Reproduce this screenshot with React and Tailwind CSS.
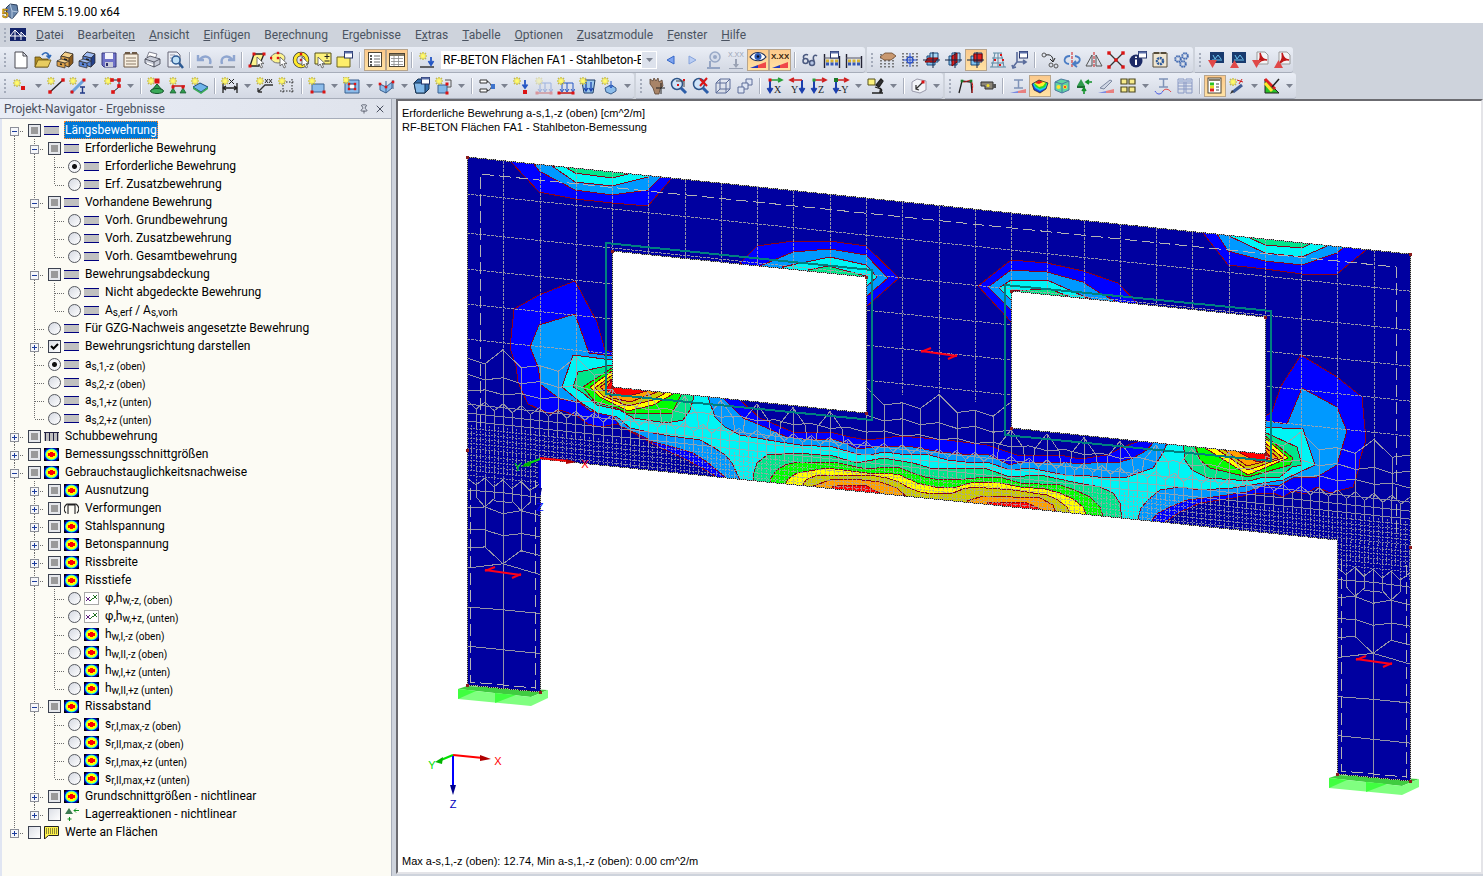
import React, { useState } from 'react';
import { Pin, X } from 'lucide-react';

/* ---------- small drawing parts shared by the toolbar icons ---------- */

const Star = ({ x = 4, y = 4 }) => (
  <g transform={`translate(${x} ${y})`}>
    <path d="M0-4V4M-4 0H4M-3-3 3 3M3-3-3 3" stroke="#a89e30" strokeWidth="1.2" />
    <path d="M0-3.5V3.5M-3.5 0H3.5M-2.4-2.4 2.4 2.4M2.4-2.4-2.4 2.4" stroke="#fff34a" strokeWidth="1" />
    <circle r="2" fill="#fffa70" />
  </g>
);

const Dots = ({ at, r = 1.5, fill = '#dc1414' }) =>
  at.map(([x, y]) => <rect key={`${x}-${y}`} x={x - r} y={y - r} width={r * 2} height={r * 2} fill={fill} />);

const Cursor = ({ x = 8, y = 6 }) => (
  <path transform={`translate(${x} ${y})`} d="M0 0V9L2.2 7 4 11 5.6 10.2 4 6.6H7Z" fill="#fff" stroke="#555" strokeWidth=".8" />
);

const Win = ({ x = 9, y = 0 }) => (
  <g transform={`translate(${x} ${y})`}>
    <rect x=".5" y=".5" width="8" height="6.5" fill="#fff" stroke="#26346a" />
    <rect x=".5" y=".5" width="8" height="2" fill="#5a6ea8" />
  </g>
);

const Cabinet = ({ a, b, c }) => (
  <g stroke="#2c2a28" strokeWidth=".7">
    <path d="M5 5 9 1 17 3V12L13 16 5 13Z" fill={c} />
    <path d="M5 5 9 1 17 3 13 7Z" fill={b} />
    <path d="M5 5 13 7V16L5 13Z" fill={a} />
    <path d="M1 10 9 12V17L1 15Z" fill={a} />
    <path d="M1 10 5 8 13 10 9 12Z" fill={b} />
    <path d="M8 8 11 9M4 13 6 13.500" stroke="#222" strokeWidth="1.6" />
  </g>
);

const Box3d = ({ on }) => (
  <g strokeWidth="1">
    <path d="M4 5H12V14H4Z" fill="#7fc0ee" stroke="#1b4a7c" />
    <path d="M7 2H15V11H7Z" fill="#a6d6f4" stroke="#1b4a7c" />
    {on === 'h' && <path d="M5 7H15L12 11H2Z" fill="#e02020" stroke="#7a0000" />}
    {on === 'v' && <path d="M7 5 12 2V11L7 15Z" fill="#e02020" stroke="#7a0000" />}
    {on === 'f' && <path d="M7 3H15V10H7Z" fill="#e02020" stroke="#7a0000" />}
    <path d="M0 9H17M10 1V17" stroke="#124" fill="none" />
  </g>
);

const Tri = ({ d, t, x = 8 }) => (
  <g>
    <path d={d} stroke="#1c3fae" strokeWidth="2" fill="none" />
    <text x={x} y="16" fontSize="10" fontFamily="Liberation Serif, serif" fill="#222">{t}</text>
  </g>
);

const Supports = ({ y = 13 }) => (
  <path d={`M4 ${y - 5}l-3 5h6zM14 ${y - 5}l-3 5h6z`} fill="#2f9a4c" stroke="#13562a" strokeWidth=".7" />
);

const Loads = ({ dim }) => (
  <g opacity={dim ? 0.35 : 1}>
    <path d="M2 16H17" stroke="#c01818" strokeWidth="1.500" />
    <path d="M5 6H16M5 6V14M10 6V14M16 6V14M3 12l2 3 2-3M8 12l2 3 2-3M14 12l2 3 2-3" stroke="#2456c4" fill="none" />
    <Star />
    <Dots at={[[2, 16], [16, 16]]} />
  </g>
);

const Table = () => (
  <g>
    <rect x="1.500" y="2.500" width="15" height="13" fill="#fff" stroke="#4c4434" />
    <path d="M2 4H16" stroke="#857b66" strokeWidth="2" />
    <path d="M3 7.5H15M3 10.5H15M3 13.5H15M6 5V15M10.500 5V15" stroke="#8a8a8a" strokeWidth=".8" />
  </g>
);

const Engine = ({ mark }) => (
  <g>
    <path d="M1.500 3V17M16.500 5V17" stroke="#223" strokeWidth="1.400" />
    <path d="M1 7H16" stroke="#556" />
    <path d="M3 10H16" stroke="#d8b430" strokeWidth="3" strokeDasharray="3 1.500" />
    <path d="M3 13H16" stroke="#3558b8" strokeWidth="3" strokeDasharray="3 1.500" />
    {mark && <Win x={7} />}
  </g>
);

const Module = ({ down }) => (
  <g>
    <path d="M3 1H17V12H3Z" fill="#183a6e" />
    <path d="M6 4 8 8 11 4 14 8M5 9H15" stroke="#6cc4f0" fill="none" />
    <path d={down ? 'M1 9H10L5.500 17Z' : 'M1 17H10L5.500 9Z'} fill="#e04848" />
  </g>
);

const Pdf = ({ down }) => (
  <g>
    <path d="M6 1H14L17 4V13H6Z" fill="#f4f4f6" stroke="#999" />
    <path d="M7 12C9 9 10 5 9 2C10 6 12 9 16 9C12 8 10 9 7 12Z" fill="#c01818" stroke="#c01818" strokeWidth="1.500" />
    <path d={down ? 'M1 9H10L5.500 17Z' : 'M1 17H10L5.500 9Z'} fill="#e04848" />
  </g>
);

const icons = {
  file: <path d="M3 1H11L15 5V17H3ZM11 1V5H15" fill="#fff" stroke="#4a4a52" />,
  open: (
    <g>
      <path d="M1 6H6L8 8H14V16H1Z" fill="#b08c22" stroke="#5c4710" strokeWidth=".8" />
      <path d="M4 9H17L14 16H1Z" fill="#e8cc60" stroke="#6c5514" strokeWidth=".8" />
      <path d="M8 4C11 0 15 2 15 6M12.500 4.500 15 7 17 4" stroke="#2f69b8" strokeWidth="1.600" fill="none" />
    </g>
  ),
  cabA: <Cabinet a="#dba04a" b="#f3cf8a" c="#8a5a1c" />,
  cabB: <Cabinet a="#5c86d8" b="#9fbcf2" c="#24408a" />,
  save: (
    <g>
      <path d="M2 2H16V16H4L2 14Z" fill="#6f72c8" stroke="#3a3b80" />
      <path d="M5 2H13V8H5Z" fill="#f3f3fb" />
      <path d="M5 11H13V16H5Z" fill="#c9cbd8" />
      <path d="M6 12H8V15H6Z" fill="#2c2d6c" />
    </g>
  ),
  report: (
    <g>
      <path d="M2 3H16V16H2Z" fill="#f8efe0" stroke="#6c5844" />
      <path d="M3 2H8M10 2H15" stroke="#6c5844" strokeWidth="2" />
      <path d="M4 7H14M4 10H14M4 13H14" stroke="#8a7a68" />
    </g>
  ),
  print: (
    <g>
      <path d="M5 1 13 3 11 8 3 6Z" fill="#fff" stroke="#667" strokeWidth=".8" />
      <path d="M1 8 6 5 16 8V13L10 16 1 12Z" fill="#c8ccd8" stroke="#3c3f4c" strokeWidth=".8" />
      <path d="M1 8 10 11 16 8M10 11V16" stroke="#3c3f4c" fill="none" strokeWidth=".8" />
      <path d="M3 12 9 14" stroke="#fff" strokeWidth="1.500" />
    </g>
  ),
  preview: (
    <g>
      <path d="M2 1H11L14 4V16H2Z" fill="#eceff6" stroke="#667" />
      <path d="M4 4H9M4 7H8M4 10H7" stroke="#99a" />
      <circle cx="10" cy="9" r="4" fill="#bfe0f6" stroke="#2c5a94" strokeWidth="1.500" />
      <path d="M13 12 17 17" stroke="#2c5a94" strokeWidth="2.500" />
    </g>
  ),
  undo: (
    <g>
      <path d="M1 16H17" stroke="#9aa0ac" strokeWidth="2" />
      <path d="M14 13C16 6 9 3 4 8M2 4V9H8" stroke="#8fa6d0" strokeWidth="2.400" fill="none" />
    </g>
  ),
  redo: (
    <g>
      <path d="M1 16H17" stroke="#9aa0ac" strokeWidth="2" />
      <path d="M4 13C2 6 9 3 14 8M16 4V9H10" stroke="#8fa6d0" strokeWidth="2.400" fill="none" />
    </g>
  ),
  selPoly: (
    <g>
      <path d="M6 3H16L11 15H2Z" fill="#fdf48e" stroke="#222" strokeWidth="1.300" />
      <Dots at={[[6, 3], [16, 3], [2, 15]]} />
      <Cursor x={9} />
    </g>
  ),
  selOval: (
    <g>
      <ellipse cx="8" cy="7" rx="7" ry="5" fill="#fdf48e" stroke="#777" />
      <Dots at={[[1, 7], [8, 2], [8, 7]]} r={1.2} />
      <Cursor x={10} />
    </g>
  ),
  selRing: (
    <g>
      <circle cx="9" cy="9" r="6" fill="none" stroke="#333" strokeWidth="4.500" />
      <circle cx="9" cy="9" r="6" fill="none" stroke="#ffe92c" strokeWidth="3" />
      <Dots at={[[9, 9], [9, 3]]} r={1.2} />
      <Cursor x={10} />
    </g>
  ),
  selPlus: (
    <g>
      <path d="M1 2H17V13H1Z" fill="#fdf27c" stroke="#55501c" />
      <path d="M13 3V8M10.500 5.500H15.500M10.500 10H15.500" stroke="#222" />
      <Cursor x={4} />
    </g>
  ),
  selWin: (
    <g>
      <path d="M1 6H8L9 4H14V16H1Z" fill="#fdee6a" stroke="#6c6420" />
      <Win x={8} />
    </g>
  ),
  navi: (
    <g>
      <rect x="2.500" y="1.500" width="13" height="14" fill="#fff" stroke="#4c4434" />
      <path d="M4 5H6M4 8H6M4 11H6M4 14H6" stroke="#222" strokeWidth="1.400" />
      <path d="M8 5H14M8 8H14M8 11H14M8 14H14" stroke="#6c6c6c" />
    </g>
  ),
  table: <Table />,
  newLoad: (
    <g>
      <Star x={5} y={5} />
      <path d="M2 16H16" stroke="#444" strokeWidth="1.600" />
      <path d="M13 6V13M10.500 10 13 14 15.500 10" stroke="#2456c4" strokeWidth="1.800" fill="none" />
    </g>
  ),
  prev: <path d="M13 5V13L6 9Z" fill="#7ea4f0" stroke="#3466c8" />,
  next: <path d="M6 5V13L13 9Z" fill="#b9cdf4" stroke="#87a4dc" />,
  resPrev: (
    <g opacity=".6">
      <circle cx="10" cy="6" r="5" fill="#cfd8ea" stroke="#6880ac" strokeWidth="1.500" />
      <circle cx="10" cy="6" r="2" fill="#6880ac" />
      <path d="M5 10V16M2 17H15" stroke="#6880ac" strokeWidth="2" />
    </g>
  ),
  resXX: (
    <g fill="#9aa2b4">
      <text x="1" y="6" fontSize="7" fontFamily="Liberation Sans, sans-serif">X.XX</text>
      <path d="M8 8V13H6L9 17 12 13H10V8Z" />
      <path d="M2 17H16V18H2Z" />
    </g>
  ),
  eye: (
    <g>
      <path d="M1 6C5 0 13 0 17 6 13 11 5 11 1 6Z" fill="#fff" stroke="#1c2f5c" strokeWidth="1.200" />
      <circle cx="9" cy="5.500" r="3.500" fill="#2d5cb8" />
      <circle cx="9" cy="5.500" r="1.200" fill="#0a0f24" />
      <path d="M9 14 17 11V17H9Z" fill="#f04848" />
      <path d="M1 17 9 14V17Z" fill="#2038c0" />
    </g>
  ),
  vals: (
    <g>
      <text x="0" y="8" fontSize="8" fontWeight="700" fontFamily="Liberation Sans, sans-serif" fill="#3a2410">X.XX</text>
      <path d="M9 14 17 11V17H9Z" fill="#f04848" />
      <path d="M1 17 9 14V17Z" fill="#2038c0" />
    </g>
  ),
  glasses: (
    <g stroke="#4b5a80" fill="none" strokeWidth="1.500">
      <circle cx="4.500" cy="10" r="2.500" />
      <circle cx="11" cy="12" r="2.500" fill="#b7c7e6" />
      <path d="M7 10 9 11M3 8C1 4 5 3 7 4M13 10C11 5 14 3 16 5" />
    </g>
  ),
  engA: <Engine mark />,
  engB: <Engine />,
  gridHand: (
    <g>
      <path d="M2 3V17M6 3V17M10 3V17M14 3V17" stroke="#555" strokeWidth="1.500" strokeDasharray="1.500 1.500" />
      <path d="M1 6 6 2H13L17 5 12 9H5Z" fill="#c89870" stroke="#6b472c" strokeWidth=".8" />
    </g>
  ),
  grid: (
    <g>
      <path d="M2 2V17M6 2V17M12 2V17M16 2V17" stroke="#555" strokeWidth="1.500" strokeDasharray="1.500 1.500" />
      <circle cx="9" cy="9" r="3" fill="none" stroke="#2a50c8" strokeWidth="1.300" />
      <path d="M9 2V16M2 9H16" stroke="#2a50c8" />
    </g>
  ),
  planeA: <Box3d on="h" />,
  planeB: <Box3d on="v" />,
  planeC: <Box3d on="f" />,
  gridMesh: (
    <g>
      <path d="M4 2H13M3 7H14M2 12H15M1 16H17M6 2 3 16M9 2V16M12 2 15 16" stroke="#5c8aa4" />
      <Dots at={[[12, 4], [6, 9], [14, 9], [11, 14]]} r={1} />
    </g>
  ),
  ucs: (
    <g>
      <path d="M6 1V11L2 16M6 11H14M1 14 2 17 5 16M12 9 15 11 12 13" stroke="#5a6c9c" strokeWidth="1.600" fill="none" />
      <Win x={8} />
    </g>
  ),
  move: (
    <g stroke="#555" fill="none">
      <circle cx="3" cy="4" r="2" />
      <circle cx="10" cy="14" r="2" />
      <circle cx="15" cy="15" r="2" />
      <path d="M5 4C10 3 12 6 12 10M9 8 12 11 14 7" stroke="#222" />
    </g>
  ),
  rotate: (
    <g fill="none">
      <path d="M9 1V17" stroke="#d01818" strokeDasharray="3 1" />
      <path d="M6 13C-1 12 1 5 7 5M12 5C19 6 18 12 11 13M13 10 10 13 14 16" stroke="#4a7cc4" strokeWidth="1.800" />
    </g>
  ),
  mirror: (
    <g fill="none" stroke="#555">
      <path d="M7 4V15H1ZM11 4V15H17Z" />
      <path d="M9 1V17" stroke="#d01818" strokeDasharray="3 1" />
    </g>
  ),
  cross: (
    <g>
      <path d="M2 2 16 16M16 2 2 16" stroke="#333" strokeWidth="1.300" />
      <Dots at={[[2, 2], [16, 2], [9, 9], [2, 16], [16, 16]]} r={1.7} />
    </g>
  ),
  info: (
    <g>
      <circle cx="7" cy="10" r="6.500" fill="#1c2a66" />
      <path d="M7 5.500V7M7 8.500V14" stroke="#fff" strokeWidth="2" />
      <Win x={9} />
    </g>
  ),
  cfg: (
    <g>
      <path d="M2 2H16V16H2Z" fill="#efe6d2" stroke="#554b38" />
      <path d="M3 2H8M10 2H15" stroke="#554b38" strokeWidth="2" />
      <circle cx="9" cy="10" r="3" fill="none" stroke="#2d5a9c" strokeWidth="2.500" strokeDasharray="2 .7" />
    </g>
  ),
  gears: (
    <g fill="none" stroke="#3f68b0" strokeWidth="2" strokeDasharray="1.600 .6">
      <circle cx="5" cy="8" r="2.800" />
      <circle cx="12" cy="5" r="2.800" />
      <circle cx="10" cy="13" r="2.800" />
    </g>
  ),
  modA: <Module down />,
  modB: <Module />,
  modC: <Pdf down />,
  modD: <Pdf />,

  // second row
  node: <g><Star x={5} y={6} /><Dots at={[[11, 11]]} r={2} /></g>,
  line: <g><path d="M3 15 16 3" stroke="#222" strokeWidth="1.300" /><Star /><Dots at={[[3, 15], [16, 3]]} r={1.7} /></g>,
  member: (
    <g>
      <path d="M2 16 15 3" stroke="#6aa2dc" strokeWidth="3" />
      <Star />
      <path d="M11 10H16M13.500 10V16M11 16H16" stroke="#223a86" strokeWidth="1.400" />
      <Dots at={[[3, 15], [15, 3]]} />
    </g>
  ),
  polyline: <g><path d="M7 3H15V10L9 15" stroke="#222" fill="none" /><Star /><Dots at={[[8, 3], [15, 3], [15, 9], [9, 15]]} r={1.8} /></g>,
  nodeSup: <g><path d="M10 7 5 13H15Z" fill="#2f9a4c" stroke="#13562a" /><ellipse cx="10" cy="14" rx="6.500" ry="2.500" fill="#3aaa58" stroke="#13562a" /><Star /><Dots at={[[10, 4]]} r={2.5} /></g>,
  lineSup: <g><path d="M3 9H16" stroke="#c01818" strokeWidth="1.500" /><Star /><Supports y={16} /><Dots at={[[4, 10], [14, 10]]} /></g>,
  surfSup: <g><path d="M2 10 9 6 17 10 10 15Z" fill="#6fb4ea" stroke="#1c4a7c" /><path d="M2 12 10 17 17 12V10L10 15 2 10Z" fill="#3aaa58" /><Star /></g>,
  dim: <g><path d="M2 6V16M16 6V16M2 11H16M5 9 2 11 5 13M13 9 16 11 13 13" stroke="#222" fill="none" strokeWidth="1.300" /><Star /><path d="M8 2 13 7M13 2 8 7" stroke="#222" /></g>,
  note: <g><path d="M2 15 9 8H17M2 15V11M2 15H6" stroke="#333" fill="none" strokeWidth="1.300" /><Star /><path d="M9 2 12 6M12 2 9 6M13 2 16 6M16 2 13 6" stroke="#333" /></g>,
  guides: <g><path d="M5 2V17M14 2V17M2 5H17M2 14H17" stroke="#222" strokeDasharray="1.500 1.500" /><Star /></g>,
  surface: <g><path d="M4 7H16V15H4Z" fill="#8cbcea" stroke="#3a6090" /><Star /><Dots at={[[4, 15], [16, 15]]} /></g>,
  opening: <g><path d="M2 3H16V16H2Z" fill="#8cbcea" stroke="#3a6090" /><path d="M6 7H12V12H6Z" fill="#fff" stroke="#1d3f6e" /><Dots at={[[6, 7], [12, 7], [6, 12], [12, 12]]} r={1.2} /><Star x={3} y={3} /></g>,
  connect: <g><path d="M2 7 8 10 14 5V11L8 16 2 13Z" fill="#8cbcea" stroke="#3a6090" /><path d="M8 4V16M15 3V12" stroke="#3a6090" /><Dots at={[[2, 7], [8, 10], [15, 5]]} r={1.3} /></g>,
  solid: <g><path d="M1 6 5 2H16V12L12 16H3Z" fill="#356fae" stroke="#173250" /><path d="M1 6H12V16H3Z" fill="#82b8e8" stroke="#173250" /><Win x={8} /></g>,
  solidNew: <g><path d="M3 8H12V16H3Z" fill="#82b8e8" stroke="#3a6090" /><path d="M10 3H16V10H12" fill="none" stroke="#555" /><Star /><Dots at={[[12, 7], [12, 16]]} /></g>,
  joint: <g><path d="M2 3H9V6H2ZM2 12H9V15H2Z" fill="#fff" stroke="#333" /><path d="M9 4.500C13 5 12 9 14 9M9 13.500C13 14 12 10 14 10" stroke="#333" fill="none" /><path d="M13 7H17V12H13Z" fill="#3f74cc" /></g>,
  nodalLoad: <g><Star /><path d="M12 3V10M9.500 7.500 12 11 14.500 7.500" stroke="#2456c4" strokeWidth="1.800" fill="none" /><Dots at={[[12, 15]]} r={2} /></g>,
  loadA: <Loads dim />,
  loadB: <Loads />,
  areaLoad: <g><path d="M3 5 6 3H16L14 16H5Z" fill="#9cc8ee" stroke="#1c3a66" /><path d="M7 5V13M12 5V13M5 11 7 14 9 11M10 11 12 14 14 11" stroke="#1d46ae" strokeWidth="1.300" fill="none" /><Star /></g>,
  freeLoad: <g><path d="M4 11 10 8 15 11V14L10 17 5 15Z" fill="#8cbcea" stroke="#3a6090" /><Star /><path d="M10 4V10M8 8 10 11 12 8" stroke="#2456c4" fill="none" /></g>,
  pan: <g><path d="M2 2 5 4 6 1 8 4 10 1 11 5 14 3 15 9 12 12 11 17H7L5 11 2 7Z" fill="#a88468" stroke="#5c4432" strokeWidth=".8" /><path d="M13 6V17M8 11H17" stroke="#222" /></g>,
  zoomIn: <g><circle cx="7" cy="7" r="5.500" fill="#cfe4f8" stroke="#2d5488" strokeWidth="1.500" /><path d="M11 11 16 16" stroke="#2d5ea8" strokeWidth="3" /><path d="M6 4H14V10" fill="none" stroke="#444" /><Dots at={[[8, 8], [14, 3]]} r={1} /></g>,
  zoomX: <g><circle cx="7" cy="7" r="5.500" fill="#cfe4f8" stroke="#2d5488" strokeWidth="1.500" /><path d="M11 11 16 16" stroke="#2d5ea8" strokeWidth="3" /><path d="M8 2 15 9M15 1 8 9" stroke="#dc1414" strokeWidth="2" /></g>,
  cube: <path d="M2 6H12V16H2ZM6 2H16V12L12 16M2 6 6 2M12 6 16 2M6 2V12H16M6 12 2 16" fill="none" stroke="#5c6c98" />,
  cubeMove: <g fill="#dfe6f4" stroke="#5c6c98"><path d="M10 2H16V8H10Z" /><path d="M6 6H12V12H6Z" /><path d="M2 10H8V16H2Z" /></g>,
  viewX: <g><Tri d="M4 3V14M1.500 11 4 15 6.500 11" t="X" /><path d="M4 3H15M12 1 16 3 12 5" stroke="#2aa038" strokeWidth="1.600" fill="none" /><Dots at={[[4, 3]]} /></g>,
  viewY: <g><Tri d="M14 3V14M11.500 11 14 15 16.500 11" t="Y" x={3} /><path d="M14 3H3M6 1 2 3 6 5" stroke="#d02020" strokeWidth="1.600" fill="none" /></g>,
  viewZ: <g><Tri d="M4 3V14M1.500 11 4 15 6.500 11" t="Z" /><path d="M4 3H15M12 1 16 3 12 5" stroke="#d02020" strokeWidth="1.600" fill="none" /><Dots at={[[4, 3]]} fill="#2aa038" /></g>,
  viewMY: <g><Tri d="M4 3V14M1.500 11 4 15 6.500 11" t="-Y" x={6} /><path d="M4 3H15M12 1 16 3 12 5" stroke="#d02020" strokeWidth="1.600" fill="none" /><Dots at={[[4, 3]]} fill="#1a7a28" r={2} /></g>,
  scope: <g><path d="M1 2H8V8H1Z" fill="#fdf27c" stroke="#55501c" /><path d="M14 2 9 8 12 10 16 4ZM8 10 14 12M5 16H16M13 11C16 13 15 15 12 16" fill="#333" stroke="#222" strokeWidth="1.300" /></g>,
  clip: <g><path d="M2 5 7 2 16 4V13L10 16 2 14Z" fill="#f2f4f8" stroke="#99a" /><path d="M6 12 13 5M6 8V12L9 13" stroke="#333" strokeWidth="1.300" fill="none" /><Dots at={[[13, 5]]} r={1.5} /></g>,
  frame: <g><path d="M2 16 5 4 14 5 15 16" fill="none" stroke="#222" strokeWidth="1.300" /><path d="M5 4C8 7 11 2 14 4 17 8 15 12 15 16" fill="none" stroke="#d01818" /><Dots at={[[5, 4], [14, 4]]} fill="#1a7a28" r={1.3} /></g>,
  animate: <g><path d="M2 5H14V12H6V9H2Z" fill="#8b8578" stroke="#333" /><path d="M14 7H17V11H14Z" fill="#555" /><circle cx="9" cy="8.500" r="1.500" fill="#f2e02c" /></g>,
  secA: <g><path d="M5 3H14M9.500 3V11M5 11H14" stroke="#7f93b8" strokeWidth="1.500" /><path d="M9 14 17 12V16H9Z" fill="#e88080" /><path d="M1 16H9V14Z" fill="#7a8ae0" /></g>,
  iso: (
    <g>
      <path d="M1 7 8 3 17 6 15 12 9 16 3 13Z" fill="#1840e0" />
      <path d="M2 7 8 3 17 6 15 11 9 14 4 11Z" fill="#18c8f0" />
      <path d="M3 7 8 3 16 6 14 10 9 12 5 10Z" fill="#28dc28" />
      <path d="M3 6 8 3 15 5 12 9 8 10Z" fill="#fff02c" />
      <path d="M4 6 8 3 12 5 8 7Z" fill="#e82020" />
      <path d="M1 7 8 3 17 6 15 12 9 16 3 13Z" fill="none" stroke="#222" strokeWidth=".7" />
    </g>
  ),
  isoCube: <g><path d="M2 5 8 2 16 4V13L9 16 2 13Z" fill="#5fd4a4" stroke="#4a7aa0" /><path d="M2 5 9 7 16 4M9 7V16" stroke="#4a7aa0" fill="none" /><circle cx="5.500" cy="10" r="2" fill="#ffe42c" /><circle cx="12" cy="10" r="2" fill="#ffe42c" /><circle cx="12" cy="10" r="1" fill="#e82020" /></g>,
  react: <g><path d="M6 2 2 9H10Z" fill="#2f9a4c" /><path d="M2 9H10V11H2Z" fill="#1c6c32" /><path d="M17 5H12M14 3 11 5 14 7M9 17V12M7 14 9 11 11 14" stroke="#129028" strokeWidth="1.600" fill="none" /></g>,
  cut: <g><path d="M3 11 13 3 15 4 7 12Z" fill="#cfd6e4" stroke="#7d88a0" /><path d="M9 14 17 12V16H9Z" fill="#e88080" /><path d="M1 16H9V14Z" fill="#7a8ae0" /></g>,
  tiles: <g fill="#f6ea8c" stroke="#4c4820" strokeWidth="1.200"><path d="M2 2H8V7H2ZM10 2H16V7H10ZM2 10H8V15H2ZM10 10H16V15H10Z" /></g>,
  secB: <g><path d="M5 2H14M9.500 2V10M5 10H14" stroke="#7f93b8" strokeWidth="1.500" /><path d="M9 14C11 11 15 12 17 15" stroke="#e04848" fill="none" /><path d="M1 14C3 18 7 18 9 14" stroke="#4858e0" fill="none" /></g>,
  cols: <g><path d="M2 2H8V16H2ZM10 2H16V16H10ZM2 6H16M2 9H16M2 12H16" fill="none" stroke="#8898c4" /><path d="M3 4H7M11 4H15" stroke="#8098c8" /></g>,
  panel: <g><rect x="2" y="1" width="13" height="15" fill="#fff" stroke="#4c4434" /><path d="M3 3H14" stroke="#857b66" strokeWidth="2" /><path d="M4 7H8" stroke="#28c028" strokeWidth="3" /><path d="M4 10H8" stroke="#e8d820" strokeWidth="3" /><path d="M4 13H8" stroke="#e02020" strokeWidth="3" /><path d="M10 7H13M10 10H13M10 13H13" stroke="#444" /></g>,
  pencil: <g><path d="M5 15 14 8" stroke="#3f5c94" strokeWidth="3" /><path d="M2 17 4 13 6 15Z" fill="#333" /><Star x={5} y={5} /><path d="M9 3 15 5M14 2 11 7" stroke="#d02020" /></g>,
  palette: <g><path d="M2 2V16H16Z" fill="#28c028" stroke="#222" /><path d="M2 2 12 12" stroke="#e02020" strokeWidth="3" /><path d="M2 6 9 14" stroke="#ffe92c" strokeWidth="3" /><path d="M16 2 9 10" stroke="#222" strokeWidth="1.500" /></g>,
};

/* ---------- toolbars ---------- */

// '|' is a separator, a trailing '*' means pressed, a trailing '+' adds a drop arrow
const rowOne = [
  ['file', 'open', 'cabA', 'cabB', 'save', 'report', 'print', 'preview', '|', 'undo', 'redo', '|', 'selPoly', 'selOval', 'selRing', 'selPlus', 'selWin', '|', 'navi*', 'table*', '|', 'newLoad', 'combo', 'prev', 'next', 'resPrev', 'resXX', 'eye*', 'vals*', '|', 'glasses', 'engA', 'engB'],
  ['gridHand', 'grid', 'planeA', 'planeB', 'planeC*', 'gridMesh', 'ucs', '|', 'move', 'rotate', 'mirror', 'cross', 'info', 'cfg', 'gears'],
  ['modA', 'modB', 'modC', 'modD'],
];
const rowTwo = [
  ['node+', 'line', 'member+', 'polyline+', '|', 'nodeSup', 'lineSup', 'surfSup', '|', 'dim+', 'note', 'guides', '|', 'surface+', 'opening+', 'connect+', 'solid', 'solidNew+', '|', 'joint+', 'nodalLoad', 'loadA', 'loadB', 'areaLoad', 'freeLoad+'],
  ['pan', 'zoomIn', 'zoomX', 'cube', 'cubeMove', '|', 'viewX', 'viewY', 'viewZ', 'viewMY+', 'scope+', '|', 'clip+'],
  ['frame', 'animate', '|', 'secA', 'iso*', 'isoCube', 'react', 'cut', 'tiles+', 'secB', 'cols', '|', 'panel*', 'pencil+', 'palette+'],
];

const Grip = () => (
  <span className="flex w-2.5 shrink-0 flex-col items-center gap-0.5" aria-hidden="true">
    {[0, 1, 2, 3].map(i => <i key={i} className="size-0.5 bg-[#a4abba]" />)}
  </span>
);

const DropArrow = () => (
  <svg width="7" height="4" viewBox="0 0 7 4"><path d="M0 0H7L3.500 4Z" fill="#7c8290" /></svg>
);

const ResultCase = () => (
  <span className="ml-[3px] mr-0.5 flex h-[18px] w-[216px] shrink-0 bg-white">
    <select aria-label="Lastfall" className="w-[200px] appearance-none overflow-hidden bg-white pl-0.5 text-[12px] leading-[18px] text-black outline-none">
      <option>RF-BETON Flächen FA1 - Stahlbeton-Bemessung</option>
    </select>
    <span className="flex flex-1 items-center justify-center border border-white bg-[#dde2ec]"><DropArrow /></span>
  </span>
);

const Tool = ({ code }) => {
  if (code === '|') return <span className="mx-[3px] h-4 w-0.5 shrink-0 border-l border-[#a9afbd] bg-white" />;
  if (code === 'combo') return <ResultCase />;
  const pressed = code.endsWith('*');
  const drop = code.endsWith('+');
  const name = code.replace(/[*+]$/, '');
  return (
    <span className="flex shrink-0 items-center">
      <button
        type="button"
        aria-label={name}
        aria-pressed={pressed}
        className={pressed
          ? 'flex size-[22px] items-center justify-center border border-[#b8a58c] bg-linear-to-b from-[#fcc98b] to-[#ffe2a4]'
          : 'flex size-[22px] items-center justify-center'}
      >
        <svg className="shrink-0" width="18" height="18" viewBox="0 0 18 18">{icons[name]}</svg>
      </button>
      {drop && (
        <button type="button" aria-label={`${name} Liste`} className="flex h-[22px] w-[13px] items-center justify-center">
          <DropArrow />
        </button>
      )}
    </span>
  );
};

const Toolbar = ({ groups }) => (
  <div className="flex h-[26px] gap-0.5 overflow-hidden">
    {groups.map((group, i) => (
      <div key={i} className="flex shrink-0 items-center rounded-r-[3px] border-b border-[#a7adba] bg-linear-to-b from-[#eaeef6] to-[#d3d8e3]">
        <Grip />
        {group.map((code, j) => <Tool key={j} code={code} />)}
      </div>
    ))}
  </div>
);

const menus = [
  ['', 'D', 'atei'], ['Bearbeite', 'n', ''], ['', 'A', 'nsicht'], ['', 'E', 'infügen'], ['Be', 'r', 'echnung'], ['Er', 'g', 'ebnisse'],
  ['E', 'x', 'tras'], ['', 'T', 'abelle'], ['', 'O', 'ptionen'], ['', 'Z', 'usatzmodule'], ['', 'F', 'enster'], ['', 'H', 'ilfe'],
];

/* ---------- navigator tree ---------- */

const Sub = ({ children }) => <span className="relative top-0.5 text-[10px]">{children}</span>;

const leaf = (label, icon, extra) => ({ label, icon, kind: 'radio', ...extra });
const folder = (label, icon, children, extra) => ({ label, icon, kind: 'mixed', children, ...extra });

const tree = [
  folder('Längsbewehrung', 'bars', [
    folder('Erforderliche Bewehrung', 'bars', [
      leaf('Erforderliche Bewehrung', 'bars', { on: true }),
      leaf('Erf. Zusatzbewehrung', 'bars'),
    ]),
    folder('Vorhandene Bewehrung', 'bars', [
      leaf('Vorh. Grundbewehrung', 'bars'),
      leaf('Vorh. Zusatzbewehrung', 'bars'),
      leaf('Vorh. Gesamtbewehrung', 'bars'),
    ]),
    folder('Bewehrungsabdeckung', 'bars', [
      leaf('Nicht abgedeckte Bewehrung', 'bars'),
      leaf(<>A<Sub>s,erf</Sub> / A<Sub>s,vorh</Sub></>, 'bars'),
    ]),
    leaf('Für GZG-Nachweis angesetzte Bewehrung', 'bars'),
    folder('Bewehrungsrichtung darstellen', 'bars', null, { kind: 'check', on: true }),
    leaf(<>a<Sub>s,1,-z (oben)</Sub></>, 'bars', { on: true }),
    leaf(<>a<Sub>s,2,-z (oben)</Sub></>, 'bars'),
    leaf(<>a<Sub>s,1,+z (unten)</Sub></>, 'bars'),
    leaf(<>a<Sub>s,2,+z (unten)</Sub></>, 'bars'),
  ], { selected: true }),
  folder('Schubbewehrung', 'stirrups'),
  folder('Bemessungsschnittgrößen', 'iso'),
  folder('Gebrauchstauglichkeitsnachweise', 'iso', [
    folder('Ausnutzung', 'iso'),
    folder('Verformungen', 'deform'),
    folder('Stahlspannung', 'iso'),
    folder('Betonspannung', 'iso'),
    folder('Rissbreite', 'iso'),
    folder('Risstiefe', 'iso', [
      leaf(<>φ,h<Sub>w,-z, (oben)</Sub></>, 'cross'),
      leaf(<>φ,h<Sub>w,+z, (unten)</Sub></>, 'cross'),
      leaf(<>h<Sub>w,I,-z (oben)</Sub></>, 'iso'),
      leaf(<>h<Sub>w,II,-z (oben)</Sub></>, 'iso'),
      leaf(<>h<Sub>w,I,+z (unten)</Sub></>, 'iso'),
      leaf(<>h<Sub>w,II,+z (unten)</Sub></>, 'iso'),
    ]),
    folder('Rissabstand', 'iso', [
      leaf(<>s<Sub>r,I,max,-z (oben)</Sub></>, 'iso'),
      leaf(<>s<Sub>r,II,max,-z (oben)</Sub></>, 'iso'),
      leaf(<>s<Sub>r,I,max,+z (unten)</Sub></>, 'iso'),
      leaf(<>s<Sub>r,II,max,+z (unten)</Sub></>, 'iso'),
    ]),
    folder('Grundschnittgrößen - nichtlinear', 'iso'),
    folder('Lagerreaktionen - nichtlinear', 'support', null, { kind: 'check' }),
  ]),
  folder('Werte an Flächen', 'values', null, { kind: 'check' }),
];

const treeIcons = {
  bars: <g shapeRendering="crispEdges"><path d="M0 2H15V11H0Z" fill="#c0c0c0" /><path d="M0 2.500H15M0 10.500H15" stroke="#00007f" strokeWidth="1" /></g>,
  stirrups: <g shapeRendering="crispEdges"><path d="M0 2H15V11H0Z" fill="#c0c0c0" /><path d="M0 2.500H15M1.500 2V11M5.500 2V11M9.500 2V11M13.500 2V11" stroke="#202040" /></g>,
  iso: (
    <>
      <path d="M0 0H15V13H0Z" fill="#000" />
      <path d="M3 0H12L15 3V10L12 13H3L0 10V3Z" fill="#0000a0" />
      <ellipse cx="7.500" cy="6.500" rx="6.500" ry="6" fill="#00f0f8" />
      <ellipse cx="7.500" cy="6.500" rx="5.500" ry="5" fill="#ffff00" />
      <path d="M5 5H6V4H9V5H11V8H9V9H6V8H4V5Z" fill="#f00" />
    </>
  ),
  deform: <path d="M2 11C-1 8 0 4 3 2H12C15 4 16 8 13 11M4 12V3H11V12" fill="none" stroke="#222" strokeWidth="1.100" />,
  cross: <><rect x=".5" y=".5" width="14" height="12" fill="#fff" stroke="#a8a8a8" /><path d="M2 5 6 9M6 5 2 9" stroke="#602080" /><path d="M9 3 13 7M13 3 9 7M6 9 9 6" stroke="#207020" /></>,
  support: <><path d="M5 0 1 6H9Z" fill="#3c7a50" /><path d="M15 2.500H10M12 .5 10 2.500 12 4.500M5.500 13V9M3.500 11H7.500" stroke="#109020" fill="none" /></>,
  values: <><path d="M.5.500H14.500V9.500H4.500L.500 13Z" fill="#fff34a" stroke="#222" /><path d="M2 3H13M2 5H13M2 7H13" stroke="#222" strokeDasharray="1 1" /></>,
};

const Branch = ({ up, down, arm }) => (
  <svg className="shrink-0" width="20" height="18" viewBox="0 0 20 18" shapeRendering="crispEdges" stroke="#6c6c6c" strokeDasharray="1 1">
    {up && <path d="M10.500 0V10" />}
    {down && <path d="M10.500 10V18" />}
    {arm && <path d="M11 10.500H20" />}
  </svg>
);

const Expander = ({ up, down, open }) => (
  <button type="button" aria-label={open ? 'Reduzieren' : 'Erweitern'} className="shrink-0">
    <svg width="20" height="18" viewBox="0 0 20 18" shapeRendering="crispEdges">
      <g stroke="#6c6c6c" strokeDasharray="1 1">
        {up && <path d="M10.500 0V6" />}
        {down && <path d="M10.500 15V18" />}
        <path d="M16 10.500H20" />
      </g>
      <rect x="6.500" y="6.500" width="8" height="8" fill="#f6f7fa" stroke="#8c8f98" />
      <path d={open ? 'M8 10.500H13' : 'M8 10.500H13M10.500 8V13'} stroke="#1c3c9c" />
    </svg>
  </button>
);

let rowId = 0;
const numbered = list => list.map(n => ({ ...n, id: `navi-${++rowId}`, children: n.children && numbered(n.children) }));
const rows = numbered(tree);

const boxBase = 'size-[13px] shrink-0 appearance-none border border-[#3c4250] bg-linear-to-br from-[#dcdfe6] to-white';
const boxMixed = 'size-[13px] shrink-0 appearance-none border border-[#3c4250] bg-[#9a9a9a] shadow-[inset_0_0_0_2px_#e6e8ec]';

const Mark = ({ node, group }) => {
  const [on, setOn] = useState(Boolean(node.on));
  if (node.kind === 'radio') {
    return (
      <input
        type="radio"
        id={node.id}
        name={group}
        defaultChecked={node.on}
        className="size-[13px] shrink-0 appearance-none rounded-full border-[1px] border-[#55585f] bg-linear-to-br from-[#d5d9e2] to-white checked:bg-[radial-gradient(circle,#111_0_2px,#f4f5f8_3px)]"
      />
    );
  }
  return (
    <span className="grid shrink-0">
      <input
        type="checkbox"
        id={node.id}
        checked={on}
        onChange={e => setOn(e.target.checked)}
        className={`col-start-1 row-start-1 ${node.kind === 'mixed' && !on ? boxMixed : boxBase}`}
      />
      {on && (
        <svg className="pointer-events-none col-start-1 row-start-1" width="13" height="13" viewBox="0 0 13 13">
          <path d="M3 6 5.500 8.500 10 4" stroke="#000" strokeWidth="2" fill="none" />
        </svg>
      )}
    </span>
  );
};

const Row = ({ node, trail, first, last, group }) => (
  <li>
    <div className="flex h-[18px] items-center">
      {trail.map((more, i) => <Branch key={i} up={more} down={more} />)}
      {node.kind === 'radio'
        ? <Branch up down={!last} arm />
        : <Expander up={!(first && trail.length === 0)} down={!last} open={Boolean(node.children)} />}
      <span className="ml-1 flex items-center gap-[3px]">
        <Mark node={node} group={group} />
        <svg className="shrink-0" width="15" height="13" viewBox="0 0 15 13">{treeIcons[node.icon]}</svg>
      </span>
      <label
        htmlFor={node.id}
        className={node.selected
          ? 'ml-[5px] whitespace-nowrap bg-[#0078d7] px-px leading-[18px] text-white outline-1 -outline-offset-1 outline-dotted outline-[#ff8728]'
          : 'ml-[5px] whitespace-nowrap px-px leading-[18px]'}
      >
        {node.label}
      </label>
    </div>
    {node.children && (
      <ul>
        {node.children.map((child, i) => (
          <Row
            key={child.id}
            node={child}
            trail={[...trail, !last]}
            first={i === 0}
            last={i === node.children.length - 1}
            group={node.id}
          />
        ))}
      </ul>
    )}
  </li>
);

const Navigator = () => (
  <aside className="flex w-[392px] shrink-0 flex-col border-r border-[#a7adba] bg-[#fcfbf4]">
    <header className="flex h-5 items-center border-b border-[#a7adba] bg-linear-to-r from-[#e9edf6] to-[#dfe3ec] pl-1 pr-1 text-[#4a5060]">
      <h2 className="flex-1">Projekt-Navigator - Ergebnisse</h2>
      <button type="button" aria-label="Anheften" className="px-1"><Pin size={10} strokeWidth={2} /></button>
      <button type="button" aria-label="Schließen" className="px-px"><X size={12} strokeWidth={2} /></button>
    </header>
    <ul className="min-h-0 flex-1 overflow-hidden border-l-2 border-[#e0e5f2] pl-0.5 pt-0.5 text-black">
      {rows.map((node, i) => (
        <Row key={node.id} node={node} trail={[]} first={i === 0} last={i === rows.length - 1} group="root" />
      ))}
    </ul>
  </aside>
);

/* ---------- result plot ---------- */

const wall = 'M467 157L1410 254V781L1337 774V540L540 459V692L467 685Z';
const holes = 'M612 251L866 277V413L612 387ZM1011 291L1265 317V454L1011 428Z';

const contours = [
  ['#0000ff', [
    '511,162 539,192 575,199 612,203 648,206 672,178 672,160 511,150',
    '1203,233 1228,265 1265,269 1302,274 1337,274 1366,250 1366,230 1203,220',
    '740,263 757,246 793,241 830,241 866,246 899,278 866,307 850,320',
    '978,286 1011,260 1047,263 1083,271 1118,283 1137,303 1120,320 1030,330 1011,322',
    '575,281 539,295 514,309 510,348 516,366 518,382 528,404 550,414 560,410 577,416 588,424 600,427 617,424 633,433 657,446 683,458 700,467 717,477 717,500 1165,560 1165,522 1180,512 1200,503 1233,498 1253,494 1273,493 1283,497 1293,491 1305,494 1317,487 1330,493 1353,487 1359,468 1359,462 1366,440 1362,397 1337,377 1301,355 1281,386 1272,412 1258,421 1240,430 1137,430 1137,442 1123,447 1107,455 1080,459 1060,455 1033,456 1017,455 987,445 947,440 900,436 885,438 867,440 850,437 830,432 793,432 760,418 740,400 725,380 620,354 605,350 597,322',
  ]],
  ['#0099ff', [
    '534,164 539,171 575,190 612,195 648,190 661,177 661,160 534,150',
    '1217,234 1228,251 1265,261 1302,265 1337,253 1343,248 1343,230 1217,220',
    '760,266 793,252 830,249 866,255 888,278 866,297 850,310',
    '988,287 1011,270 1047,272 1083,282 1100,293 1117,302 1100,315 1030,325 1011,310',
    '575,314 539,325 530,347 538,367 541,385 560,399 579,402 590,411 612,416 620,426 640,435 653,442 677,448 693,453 707,462 725,477 725,500 1152,550 1152,520 1158,513 1170,507 1187,500 1213,497 1247,492 1263,486 1280,485 1293,478 1317,477 1337,465 1347,431 1337,407 1302,388 1287,424 1260,420 1240,430 1153,430 1153,443 1147,450 1133,458 1117,463 1100,462 1083,464 1060,462 1033,463 1020,462 1010,465 987,454 962,454 940,452 913,447 883,446 857,449 845,443 833,439 810,440 787,437 767,428 743,418 725,400 710,380 625,370 612,356 589,353',
  ]],
  ['#00f5f5', [
    '552,166 575,182 612,186 648,177 650,160 552,150',
    '1227,235 1265,253 1302,257 1327,246 1327,230 1227,220',
    '782,267 830,257 866,265 877,277 866,287 850,300',
    '999,288 1011,280 1047,280 1083,296 1093,300 1080,315 1030,320 1011,300',
    '573,355 562,387 580,402 597,413 617,417 630,428 653,433 670,436 700,440 713,447 725,455 732,463 739,478 739,500 1138,550 1138,518 1141,508 1148,500 1160,490 1180,487 1200,490 1233,488 1263,483 1283,480 1315,465 1303,429 1260,427 1240,430 1167,430 1167,443 1163,453 1153,468 1127,477 1105,478 1083,475 1065,475 1050,472 1030,468 1010,470 987,462 965,462 947,460 930,455 900,454 883,452 870,455 857,454 833,447 800,445 780,442 757,438 740,435 725,427 715,417 708,397 690,380 630,375 612,360',
  ]],
  ['#00e68a', [
    '567,168 575,173 612,178 628,174 628,160 567,150',
    '1250,238 1265,245 1302,248 1310,244 1310,230 1250,220',
    '808,270 828,266 866,276 860,290 808,290',
    '1011,291 1050,289 1070,297 1060,310 1011,310',
    '612,365 578,372 573,387 583,393 597,405 620,410 633,418 667,423 683,420 690,410 694,397 690,380 620,370',
    '1183,440 1185,460 1192,470 1208,478 1250,481 1263,477 1280,477 1292,467 1302,465 1297,447 1264,432 1250,440',
    '753,490 753,475 757,463 767,455 797,453 833,456 857,463 883,458 913,463 930,468 947,468 987,469 1010,477 1040,475 1073,482 1100,487 1113,493 1120,503 1123,530',
  ]],
  ['#00ff00', [
    '612,368 583,387 595,402 617,408 628,414 672,413 677,403 682,393 670,380',
    '1193,440 1200,460 1210,468 1248,477 1290,465 1293,458 1264,435 1250,440',
    '768,490 771,478 777,470 785,465 797,462 833,462 867,469 887,467 900,468 913,473 925,477 940,480 965,479 987,477 1003,478 1020,483 1060,485 1075,490 1090,497 1100,507 1108,530',
  ]],
  ['#ffff00', [
    '612,371 590,387 600,397 628,411 653,405 675,393 660,380',
    '1200,440 1205,448 1248,475 1288,458 1264,437 1250,440',
    '783,490 788,479 797,473 827,468 867,473 885,473 900,475 917,483 940,488 957,487 973,482 1000,483 1020,487 1045,489 1060,493 1073,499 1083,507 1092,530',
  ]],
  ['#cccc00', [
    '612,375 595,388 603,396 628,406 653,400 667,392 650,380',
    '1212,446 1248,470 1283,458 1264,442 1250,440',
    '800,490 806,480 817,475 850,475 870,475 887,478 899,482 907,487 920,492 933,494 953,493 963,489 973,487 1013,490 1047,495 1058,500 1067,507 1078,530',
  ]],
  ['#ffa000', [
    '612,379 600,387 613,398 630,402 660,391 640,380',
    '1223,449 1247,466 1278,458 1264,446 1250,440',
    '813,486 830,480 853,479 880,482 897,488 910,500 813,500',
    '967,501 983,496 1013,497 1040,498 1053,505 1062,530 967,530',
  ]],
  ['#ff0000', [
    '612,380 605,390 613,393 625,397 647,391 640,380',
    '1235,450 1257,462 1271,458 1264,449 1250,445',
    '832,487 843,485 867,486 883,495 832,500',
    '987,503 1007,502 1027,503 1047,512 1047,520 987,520',
  ]],
];

// Mesh coordinates are unsheared: y counts as on the left edge of the wall (x = 467).
const COL = 943 / 26;
const col = i => Math.round(467 + i * COL);
const seg = (x1, y1, x2, y2) => `M${x1} ${y1}L${x2} ${y2}`;

const coarse = [];
for (let i = 1; i < 26; i++) {
  const besideHole = i <= 4 || (i >= 11 && i <= 15) || i >= 22;
  coarse.push(seg(col(i), 157, col(i), besideHole ? 350 : 372));
}
[194, 233, 269, 304, 339].forEach(y => coarse.push(seg(467, y, 1410, y)));

const medium = [];
for (let i = 0; i < 26; i++) {
  const x = col(i);
  const mid = Math.round(x + COL / 2);
  const right = col(i + 1);
  const underHole = (i >= 4 && i < 11) || (i >= 15 && i < 22);
  const top = underHole ? 374 : i % 2 ? 346 : 358;
  const next = underHole ? 374 : i % 2 ? 358 : 346;
  // hexagon-like fan between the coarse and the halved columns
  if (underHole) {
    medium.push(`M${x} ${top}L${x + 12} 390 ${x + 14} 404M${x} ${top}L${x - 12} 390 ${x - 14} 404`);
    medium.push(seg(x, top, x, 404));
  } else {
    medium.push(`M${x} ${top}L${mid} 362L${right} ${next}`);
    medium.push(seg(mid, 362, mid, 404));
    medium.push(seg(x, top, x, 404));
    medium.push(`M${x} 374L${mid} 378L${right} 374`);
  }
  medium.push(`M${x} 391L${mid} 388L${right} 391`);
}

const small = [];
for (let x = 467; x < 1410; x += COL / 2) {
  const q = COL / 4;
  small.push(`M${x} 400L${x + q} 408L${x + 2 * q} 400`);
  small.push(`M${x} 402V428M${x + q} 408V428`);
}
[404, 413, 421].forEach(y => small.push(seg(467, y, 1410, y + 1)));

const fine = [];
for (let x = 467; x <= 1410; x += COL / 8) fine.push(`M${x} 424V452`);
[428, 433, 438, 443, 448].forEach(y => fine.push(seg(467, y, 1410, y)));

// one leg, drawn at the left end and repeated at the right one
const legFine = [];
for (let x = 467; x <= 540; x += COL / 8) legFine.push(`M${x} 450V470`);
for (let x = 467; x <= 540; x += COL / 4) legFine.push(`M${x} 466V484`);
[455, 460, 465, 470, 475].forEach(y => legFine.push(seg(467, y, 540, y)));
const leg = 'M467 478L476 484 485 476 494 484 503 476 512 484 521 476 530 484 540 476'
  + 'M476 484V496L485 505 494 496V484M512 484V496L521 505 530 496V484M467 490L503 489 540 490M494 498H512'
  + 'M467 508L485 505 503 510 521 505 540 508M485 476V546M521 476V546M503 476V685'
  + 'M467 529L485 528 503 532 521 528 540 529M467 548L485 545 503 560 521 545 540 548M467 568L503 560 540 567'
  + 'M467 607L503 606 540 606M467 646L503 646 540 646';

const Direction = ({ x, y }) => (
  <path transform={`translate(${x} ${y})`} d="M0 0 36 5M0 1 10-3M36 4 27 8M0 0H4M32 5H36" stroke="#ff0018" strokeWidth="2" fill="none" />
);

const Support = ({ x, y }) => (
  <g transform={`translate(${x} ${y})`}>
    <path d="M0 3 9 0 90 4 73 11Z" fill="#40cc40" />
    <path d="M0 3 73 11V20L0 13Z" fill="#80ff80" />
    <path d="M0 3 18 5 0 13ZM37 7 58 9 37 17Z" fill="#40ff40" />
    <path d="M73 11 90 4V12L73 20Z" fill="#80ff80" />
  </g>
);

const AxisText = ({ x, y, fill, children }) => (
  <text x={x} y={y} fill={fill} fontSize="11" fontFamily="Liberation Sans, sans-serif" textAnchor="middle">{children}</text>
);

const Plot = () => (
  <svg className="block min-h-0 w-full flex-1" viewBox="398 135 1083 705" preserveAspectRatio="xMinYMin meet" role="img" aria-label="Erforderliche Bewehrung">
    <defs>
      <clipPath id="wall"><path d={`${wall}${holes}`} clipRule="evenodd" /></clipPath>
    </defs>

    <Support x={458} y={686} />
    <Support x={1329} y={775} />

    <g shapeRendering="crispEdges">
      <g clipPath="url(#wall)">
        <path d={wall} fill="#0000a0" />
        {contours.map(([fill, shapes]) => shapes.map(points => (
          <polygon key={points} points={points} fill={fill} stroke="#8c0018" strokeWidth="1" />
        )))}
        <g transform="translate(0 -48) matrix(1 .1029 0 1 0 0)" fill="none" stroke="#a4a4a8">
          <path d={coarse.join('')} strokeDasharray="3 1" opacity=".9" />
          <path d={medium.join('')} opacity=".9" />
          <path d={small.join('')} opacity=".85" />
          <path d={fine.join('')} strokeDasharray="2 1" opacity=".8" />
          {[0, 870].map(dx => (
            <g key={dx} transform={`translate(${dx} 0)`}>
              <path d={legFine.join('')} strokeDasharray="2 1" opacity=".8" />
              <path d={leg} opacity=".9" />
            </g>
          ))}
        </g>
      </g>

      <path d={`${wall}${holes}`} fill="none" stroke="#222" strokeDasharray="1 1" />
      <path d={`${wall}${holes}`} fill="none" stroke="#b0b0b0" strokeDasharray="1 1" strokeDashoffset="1" />
      <path
        d="M480 427V174L1396 267V532M470 488V682L535 688V480M1341 560V771L1406 777V560"
        fill="none"
        stroke="#b4b4b4"
        strokeDasharray="12 5"
      />
      <path d="M606 243 872 270V420L606 394ZM1005 285 1271 311V461L1005 435Z" fill="none" stroke="#008080" strokeWidth="2" />
      <Dots
        at={[[467, 157], [1410, 254], [612, 251], [866, 277], [866, 413], [612, 387], [1011, 291], [1265, 317], [1265, 454], [1011, 428], [467, 450], [1410, 547], [467, 685], [540, 692], [1337, 774], [1410, 781]]}
        r={1.5}
        fill="#8c1c1c"
      />
    </g>

    <Direction x={485} y={570} />
    <Direction x={921} y={351} />
    <Direction x={1356} y={659} />

    {/* local axes at the beam corner */}
    <path d="M540 459V495" stroke="#0000e0" strokeWidth="2" />
    <path d="M538 488H542L540 497Z" fill="#00008c" />
    <path d="M540 459 524 465" stroke="#00e000" strokeWidth="2" />
    <path d="M530 461 521 467 531 466Z" fill="#00b400" />
    <path d="M540 458 568 461" stroke="#ff0000" strokeWidth="2" />
    <path d="M566 459 576 462 566 464Z" fill="#b00000" />
    <AxisText x={585} y={468} fill="#ff0000">X</AxisText>
    <AxisText x={518} y={471} fill="#00e000">Y</AxisText>
    <AxisText x={540} y={511} fill="#0000ff">Z</AxisText>

    {/* global axes */}
    <path d="M453 755 483 758" stroke="#ff0000" strokeWidth="2" />
    <path d="M480 755 491 759 480 761Z" fill="#b00000" />
    <path d="M453 755 441 760" stroke="#00e000" strokeWidth="2" />
    <path d="M443 757 435 762 442 764Z" fill="#00b400" />
    <path d="M453 756V787" stroke="#0000ff" strokeWidth="2" />
    <path d="M450 785H456L453 795Z" fill="#00008c" />
    <AxisText x={498} y={765} fill="#ff0000">X</AxisText>
    <AxisText x={432} y={769} fill="#00e000">Y</AxisText>
    <AxisText x={453} y={808} fill="#0000c0">Z</AxisText>
  </svg>
);

const App = () => (
  <div className="flex h-screen flex-col overflow-hidden bg-[#ced3dc] font-[Roboto,'Open_Sans',sans-serif] text-[12px] leading-4 text-black">
    <header className="flex h-[23px] shrink-0 items-center gap-1 bg-white pl-0.5">
      <svg width="17" height="17" viewBox="0 0 17 17">
        <path d="M4 5 8 1 15 2 16 9 10 16 5 12Z" fill="#6684aa" stroke="#2c3f5c" />
        <path d="M8 1 10 8 16 9M10 8V16" stroke="#b4c8e0" fill="none" />
        <text x="0" y="15" fontSize="12" fontWeight="700" fontFamily="Liberation Sans, sans-serif" fill="#f4c020" stroke="#5c4408" strokeWidth=".5">5</text>
      </svg>
      <h1>RFEM 5.19.00 x64</h1>
    </header>

    <nav className="flex h-[23px] shrink-0 items-center text-[#4b5361]">
      <Grip />
      <svg width="16" height="13" viewBox="0 0 16 13">
        <path d="M0 0H16V13H0Z" fill="#14246a" />
        <path d="M0 8H16M5 12V2L0 8M5 2 11 8M11 12V4L16 9" stroke="#fff" fill="none" />
      </svg>
      <div className="ml-2.5 flex gap-[14px]">
        {menus.map(([before, key, after]) => (
          <button key={before + key + after} type="button">{before}<u>{key}</u>{after}</button>
        ))}
      </div>
    </nav>

    <div className="flex shrink-0 flex-col pt-px">
      <Toolbar groups={rowOne} />
      <Toolbar groups={rowTwo} />
    </div>

    <div className="flex min-h-0 flex-1">
      <Navigator />
      <main className="mb-0.5 ml-1 flex min-w-0 flex-1 flex-col border-b-2 border-l-2 border-r-2 border-t-2 border-b-[#e4e4e8] border-l-[#6b6b70] border-r-[#e4e4e8] border-t-[#6b6b70] bg-white font-['Liberation_Sans',Arial,sans-serif] text-[11px] leading-[14px]">
        <div className="px-1 pb-px pt-[5px]">
          <p>Erforderliche Bewehrung a-s,1,-z (oben) [cm^2/m]</p>
          <p>RF-BETON Flächen FA1 - Stahlbeton-Bemessung</p>
        </div>
        <Plot />
        <p className="px-1 pb-1">Max a-s,1,-z (oben): 12.74, Min a-s,1,-z (oben): 0.00 cm^2/m</p>
      </main>
    </div>
  </div>
);

export default App;
